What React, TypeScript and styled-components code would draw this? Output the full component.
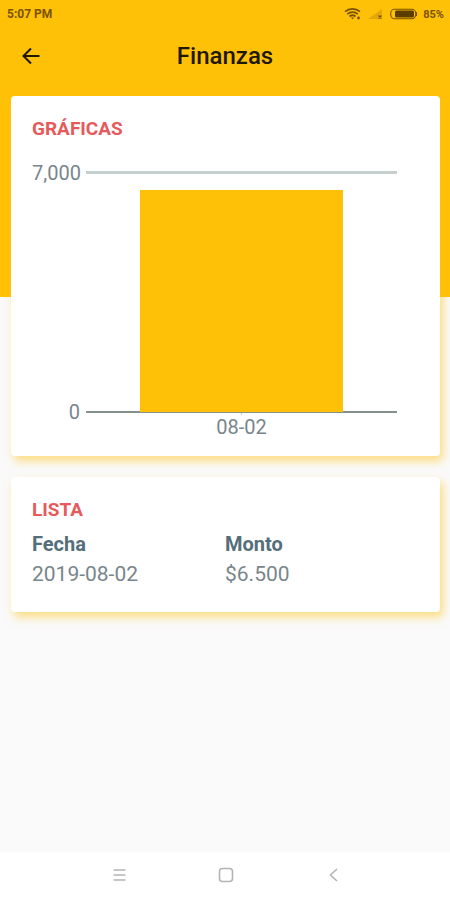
import React from "react";
import styled, {createGlobalStyle} from "styled-components";

const colors = {
  primary: "#ffc107",
  background: "#fafafa",
  heading: "#e65a5c",
  label: "#546e7a",
  text: "#78868b",
  grid: "#c5d0ce",
  axis: "#84918f",
  status: "#7a5200",
  nav: "#b4b4b4",
};

interface Entry {
  date: string;
  amount: number;
}

const entries: Entry[] = [
  {date: "2019-08-02", amount: 6500},
];

const CHART_MAX = 7000;

const GlobalStyle = createGlobalStyle`
  body {
    margin: 0;
    background-color: ${colors.background};
    font-family: Roboto, "Liberation Sans", sans-serif;
  }
`;

const Screen = styled.div`
  display: flex;
  flex-direction: column;
  min-height: 100vh;
  background: linear-gradient(${colors.primary} 297px, ${colors.background} 297px);
`;

const StatusBar = styled.div`
  display: flex;
  align-items: center;
  justify-content: space-between;
  height: 28px;
  padding: 0 6px 0 7px;
  color: ${colors.status};
  font-size: 11px;
  font-weight: 700;
`;

const Clock = styled.span`
  font-size: 12px;
`;

const StatusIcons = styled.div`
  display: flex;
  align-items: center;
  gap: 6px;
`;

const AppBar = styled.header`
  display: grid;
  grid-template-columns: 48px 1fr 48px;
  align-items: center;
  height: 56px;
  padding: 0 7px;
`;

const IconButton = styled.button`
  display: flex;
  align-items: center;
  justify-content: center;
  width: 48px;
  height: 48px;
  padding: 0;
  border: none;
  background: none;
  color: inherit;
  cursor: pointer;
`;

const Title = styled.h1`
  margin: 0;
  color: #1f1800;
  font-size: 24px;
  font-weight: 500;
  line-height: 28px;
  text-align: center;
`;

const Content = styled.main`
  display: flex;
  flex: 1;
  flex-direction: column;
  gap: 21px;
  padding: 12px 10px 24px 11px;
`;

const Card = styled.section`
  padding: 20px 22px 20px 21px;
  border-radius: 4px;
  background-color: #fff;
  box-shadow: 3px 5px 10px rgba(255, 193, 7, 0.5);
`;

const CardTitle = styled.h2`
  margin: 0 0 6px;
  color: ${colors.heading};
  font-size: 19px;
  font-weight: 700;
  line-height: 26px;
`;

const ChartGrid = styled.div`
  display: grid;
  grid-template-columns: 48px 1fr;
  column-gap: 6px;
  padding-top: 23px;
  padding-right: 21px;
  color: ${colors.text};
  font-size: 20px;
  line-height: 18px;
`;

const ValueAxis = styled.div`
  display: flex;
  flex-direction: column;
  justify-content: space-between;
  margin: -7px 0 -8px;
  text-align: right;
`;

const Plot = styled.div`
  display: flex;
  align-items: flex-end;
  justify-content: space-around;
  box-sizing: border-box;
  height: 242px;
  border-top: 3px solid ${colors.grid};
  border-bottom: 2px solid ${colors.axis};
`;

const Bar = styled.div`
  width: 65%;
  margin-bottom: -1px;
  padding-top: 2px;
  background-color: ${colors.primary};
`;

const CategoryAxis = styled.div`
  display: flex;
  grid-column: 2;
  justify-content: space-around;
`;

const Category = styled.span`
  display: flex;
  flex-direction: column;
  align-items: center;

  &::before {
    content: "";
    width: 1px;
    height: 2px;
    margin-bottom: 3px;
    background-color: ${colors.grid};
  }
`;

const Table = styled.table`
  width: 100%;
  margin-bottom: 3px;
  border-collapse: collapse;
  table-layout: fixed;
  color: ${colors.text};
  font-size: 21px;
  line-height: 30px;
  text-align: left;
`;

const HeadCell = styled.th`
  padding: 0;
  color: ${colors.label};
  font-size: 20px;
  font-weight: 700;
`;

const Cell = styled.td`
  padding: 0;
`;

const NavigationBar = styled.nav`
  display: flex;
  align-items: center;
  justify-content: center;
  gap: 59px;
  height: 46px;
  padding: 0 0 2px 1px;
  background-color: #fff;
  color: ${colors.nav};
`;

const formatTick = (value: number) => value.toLocaleString("en-US");

const formatAmount = (value: number) => `$${value.toLocaleString("en-US").replace(",", ".")}`;

const WifiIcon: React.FC = () => (
  <svg width="18" height="14" viewBox="0 0 18 14" fill="none" stroke="currentColor" strokeWidth="1.7">
    <path d="M1 4.6C5.2 0.9 11.8 0.9 16 4.6"/>
    <path d="M3.2 7.1C6.2 4.5 10.8 4.5 13.8 7.1"/>
    <path d="M5.5 9.5C7.3 8 9.7 8 11.5 9.5"/>
    <path d="M7 10.6H10L8.5 12.6Z" fill="currentColor" stroke="none"/>
    <circle cx="14.5" cy="11" r="1.4" fill="currentColor" stroke="none"/>
  </svg>
);

const SignalIcon: React.FC = () => (
  <svg width="15" height="12" viewBox="0 0 15 12" fill="currentColor">
    <path d="M0 11L14 1V11Z" opacity="0.22"/>
    <path d="M10.5 7.5L13.5 10.5M13.5 7.5L10.5 10.5" stroke="currentColor" strokeWidth="1.3"/>
  </svg>
);

const BatteryIcon: React.FC = () => (
  <svg width="28" height="12" viewBox="0 0 28 12">
    <rect x="1.7" y="1.2" width="25" height="9.6" rx="4" fill="none" stroke="currentColor" strokeWidth="1.1"/>
    <rect x="6" y="2.6" width="19" height="6.8" rx="1.5" fill="#5c3d00"/>
    <rect x="27" y="4" width="1" height="4" fill="currentColor"/>
  </svg>
);

const BackIcon: React.FC = () => (
  <svg width="20" height="20" viewBox="0 0 20 20" fill="none" stroke="#1f1800" strokeWidth="2">
    <path d="M18.5 10H3M10 2.5L2.5 10L10 17.5"/>
  </svg>
);

const MenuIcon: React.FC = () => (
  <svg width="14" height="14" viewBox="0 0 14 14" stroke="currentColor" strokeWidth="1.6">
    <path d="M1.5 2H13.5M1.5 7H13.5M1.5 12H13.5"/>
  </svg>
);

const HomeIcon: React.FC = () => (
  <svg width="16" height="16" viewBox="0 0 16 16" fill="none" stroke="currentColor" strokeWidth="1.6">
    <rect x="1.5" y="1.5" width="13" height="13" rx="3"/>
  </svg>
);

const ChevronIcon: React.FC = () => (
  <svg width="14" height="14" viewBox="0 0 14 14" fill="none" stroke="currentColor" strokeWidth="1.6">
    <path d="M11 1L4.5 7L11 13"/>
  </svg>
);

const BarChart: React.FC<{ data: Entry[] }> = ({data}) => (
  <ChartGrid>
    <ValueAxis>
      <span>{formatTick(CHART_MAX)}</span>
      <span>0</span>
    </ValueAxis>
    <Plot>
      {data.map((e) => (
        <Bar key={e.date} style={{height: `${e.amount / CHART_MAX * 100}%`}}/>
      ))}
    </Plot>
    <CategoryAxis>
      {data.map((e) => <Category key={e.date}>{e.date.slice(5)}</Category>)}
    </CategoryAxis>
  </ChartGrid>
);

const App: React.FC = () => {
  return (
    <Screen>
      <GlobalStyle/>
      <StatusBar>
        <Clock>5:07 PM</Clock>
        <StatusIcons>
          <WifiIcon/>
          <SignalIcon/>
          <BatteryIcon/>
          <span>85%</span>
        </StatusIcons>
      </StatusBar>
      <AppBar>
        <IconButton type="button" aria-label="Volver">
          <BackIcon/>
        </IconButton>
        <Title>Finanzas</Title>
      </AppBar>
      <Content>
        <Card>
          <CardTitle>GRÁFICAS</CardTitle>
          <BarChart data={entries}/>
        </Card>
        <Card>
          <CardTitle>LISTA</CardTitle>
          <Table>
            <thead>
              <tr>
                <HeadCell scope="col">Fecha</HeadCell>
                <HeadCell scope="col">Monto</HeadCell>
              </tr>
            </thead>
            <tbody>
              {entries.map((e) => (
                <tr key={e.date}>
                  <Cell>{e.date}</Cell>
                  <Cell>{formatAmount(e.amount)}</Cell>
                </tr>
              ))}
            </tbody>
          </Table>
        </Card>
      </Content>
      <NavigationBar>
        <IconButton type="button" aria-label="Recientes">
          <MenuIcon/>
        </IconButton>
        <IconButton type="button" aria-label="Inicio">
          <HomeIcon/>
        </IconButton>
        <IconButton type="button" aria-label="Atrás">
          <ChevronIcon/>
        </IconButton>
      </NavigationBar>
    </Screen>
  );
};

export default App;
